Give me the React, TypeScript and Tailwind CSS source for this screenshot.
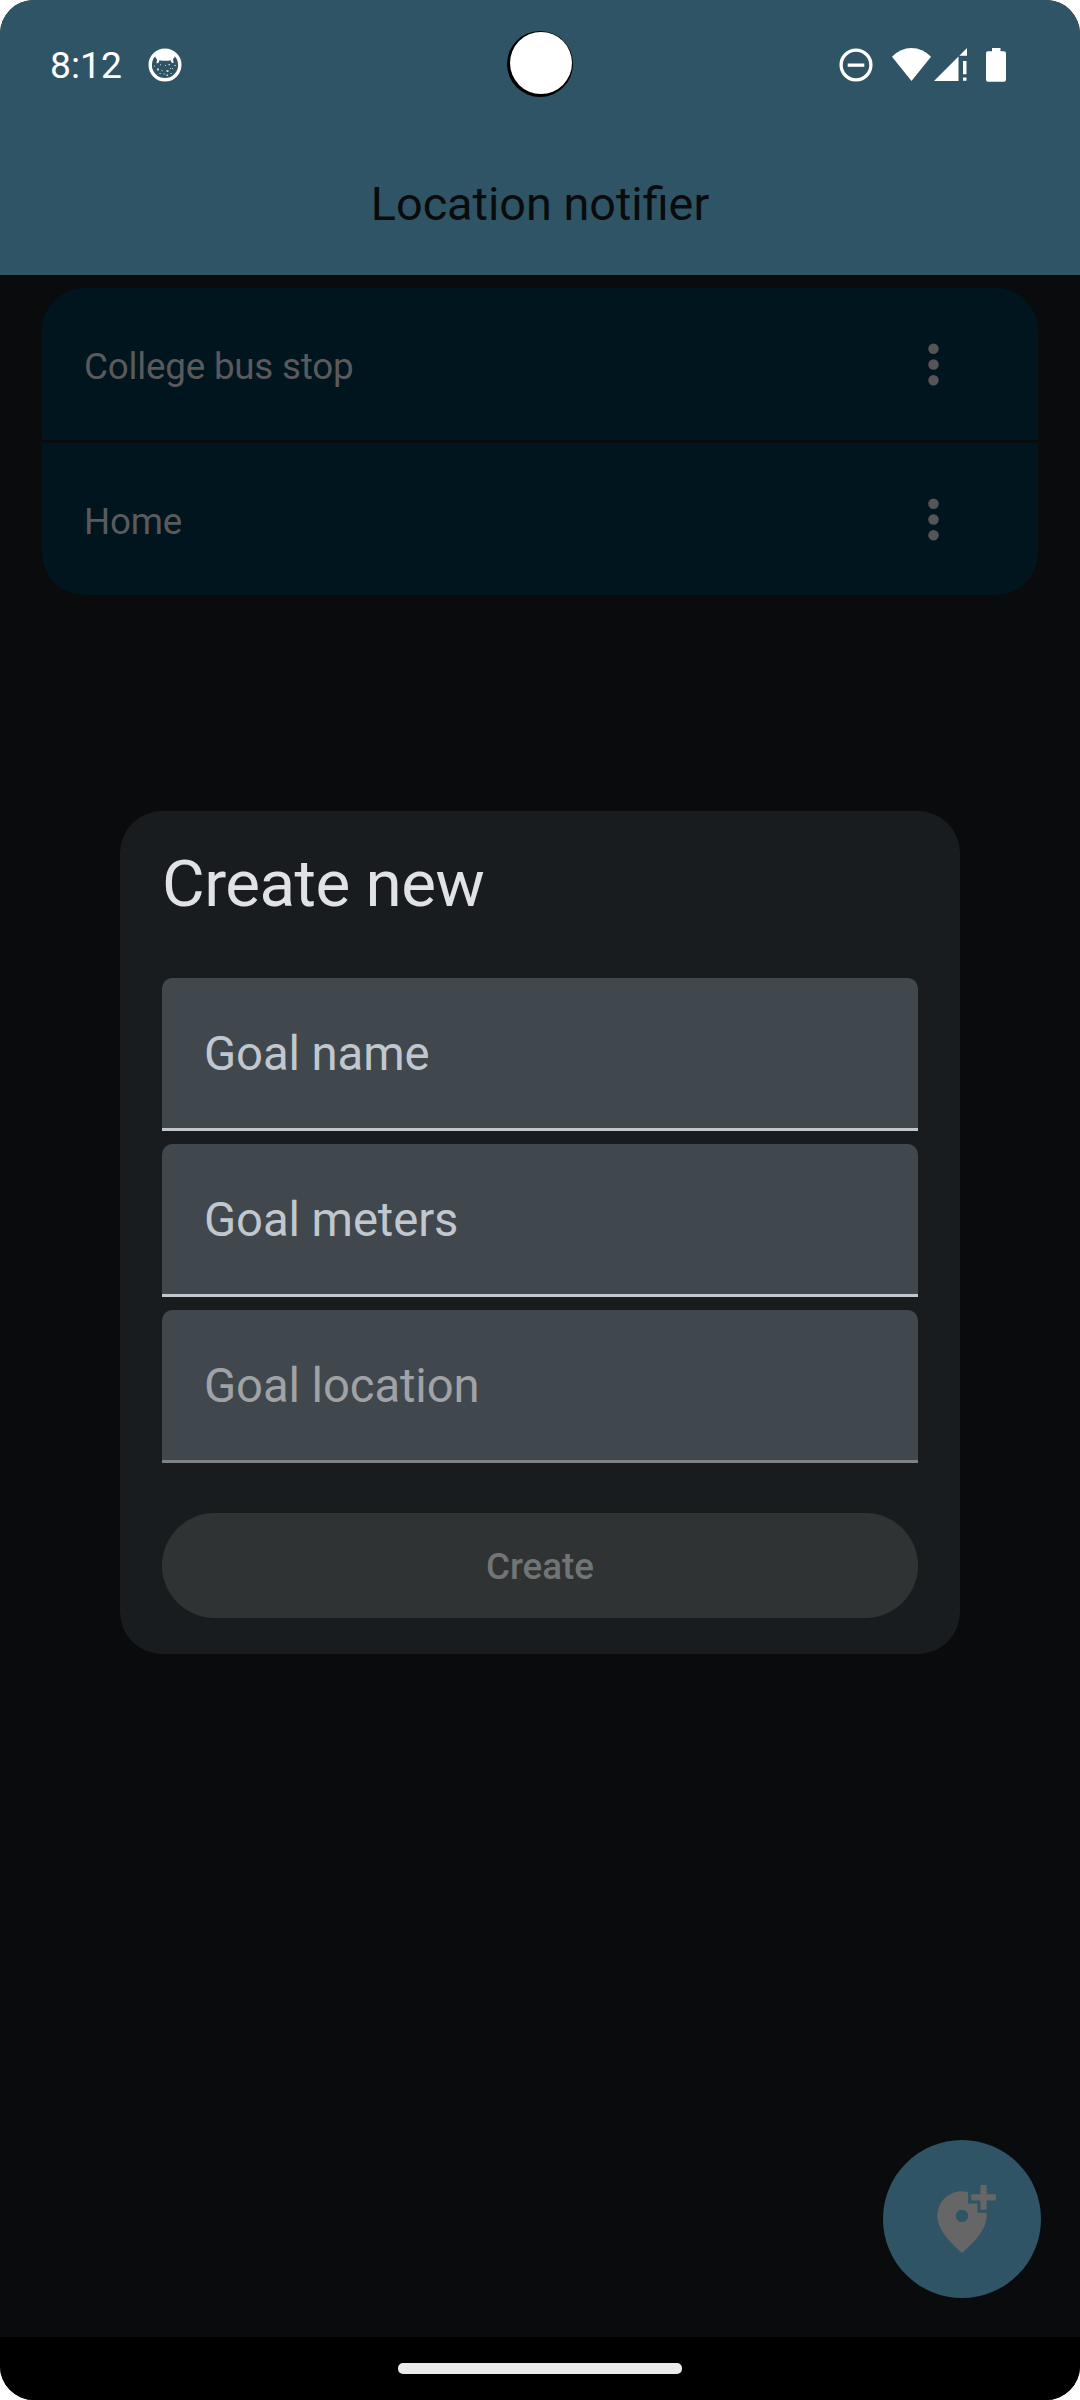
import React from "react";

function CatIcon() {
  return (
    <svg className="block size-[34px]" viewBox="0 0 34 34" fill="#fff">
      <circle cx="17" cy="17" r="14.8" fill="none" stroke="#fff" strokeWidth="3.4" />
      <path d="M7 7C12 1.200 22 1.200 27 7L26.500 9.500L25 11L25.600 15L23.800 14.800L22.500 12.200C19 13 15 13 11.500 12.200L10.500 14.800L8.600 15.600L9 11.500L7.400 9.500Z" />
      <path d="M17 17h1v1h-1zM20.500 16h1.500v1.200h-1.500zM12 16.200h1v1h-1zM9 20.500h2v2h-2zM13.500 22h1v1.200h-1zM18.500 22h2v2h-2zM24 20h1v1h-1zM26.500 17h1.500v1h-1.500zM11.500 25h1.200v1h-1.200zM15.500 25.500h1.200v1h-1.200zM18.500 26.500h1.500v1.400h-1.500zM22.500 25h1.200v1h-1.200zM6 17.500h1v1h-1zM22 20h1v1h-1z" opacity=".75" />
    </svg>
  );
}

function StatusBar() {
  return (
    <div className="flex h-[130px] items-center justify-between pl-[50px] pr-[74px]">
      <div className="flex items-center gap-[26px]">
        <span className="pt-[2px] text-[37.25px] leading-none text-white">8:12</span>
        <CatIcon />
      </div>
      <div className="flex items-center">
        <svg className="mr-[19px] block size-[34px]" viewBox="0 0 34 34">
          <circle cx="17" cy="17" r="14.900" fill="none" stroke="#fff" strokeWidth="3.300" />
          <path d="M8.700 15.500h16.600v3.300h-16.600z" fill="#fff" />
        </svg>
        <svg className="mr-[3px] block h-[34px] w-[39px]" viewBox="0 0 39 34" fill="#fff">
          <path d="M0 8.700Q8.500 0 19.500 0T39 8.700L19.500 33Z" />
        </svg>
        <svg className="mr-[19px] block h-[34px] w-[33px]" viewBox="0 0 33 34" fill="#fff">
          <path d="M0 33L24.500 8.500V33ZM25.300 7.700L33 0V7.700ZM29 13h3.500v13.300h-3.500zM29 29.500h3.500v3.300h-3.500z" />
        </svg>
        <svg className="block h-[34px] w-[20px]" viewBox="0 0 20 34" fill="#fff">
          <path d="M6 0h8.500v3.200H18a2 2 0 0 1 2 2V31.800a2 2 0 0 1-2 2H2a2 2 0 0 1-2-2V5.200a2 2 0 0 1 2-2H6Z" />
        </svg>
      </div>
    </div>
  );
}

function GoalRow({ name }: { name: string }) {
  return (
    <div className="flex h-[152px] items-center justify-between bg-[#00151d] pl-[42px] pr-[73px]">
      <span className="pt-[6px] text-[36.75px] leading-none tracking-[-0.2px] text-[#5a5a5c]">{name}</span>
      <svg className="block size-[63px]" viewBox="0 0 24 24" fill="#555">
        <circle cx="12" cy="6" r="2" />
        <circle cx="12" cy="12" r="2" />
        <circle cx="12" cy="18" r="2" />
      </svg>
    </div>
  );
}

function Field({ label, disabled = false }: { label: string; disabled?: boolean }) {
  return (
    <div
      className={
        "flex h-[153px] items-center rounded-t-[10.5px] border-b-[3px] bg-[#41484d] pl-[42px] " +
        (disabled ? "border-[#7e8386] text-[#a0a3a5]" : "border-[#c1c7ce] text-[#c1c7ce]")
      }
    >
      <span className="pt-[4px] text-[47.25px] leading-none tracking-[-0.1px]">{label}</span>
    </div>
  );
}

export default function App() {
  return (
    <div className="h-[2400px] w-[1080px] bg-white font-['Roboto',sans-serif]">
      <div className="relative flex h-full flex-col overflow-hidden rounded-[34px] bg-[#0a0b0d]">
        <header className="h-[275px] bg-[#2f5465]">
          <StatusBar />
          <h1 className="mt-[49px] text-center text-[46.8px] leading-[50px] text-[#0a0b0c]">Location notifier</h1>
        </header>

        <div className="absolute left-[507px] top-[31px] size-[66px] rounded-full bg-black">
          <div className="ml-[2.5px] mt-[0.5px] size-[62px] rounded-full bg-white" />
        </div>

        <main className="flex flex-1 flex-col px-[42px] pt-[13px]">
          <div className="flex flex-col gap-[3px] overflow-hidden rounded-[42px]">
            <GoalRow name="College bus stop" />
            <GoalRow name="Home" />
          </div>
        </main>

        <button className="mb-[39px] mr-[39px] flex size-[158px] items-center justify-center self-end rounded-full bg-[#2f5465]">
          <svg className="block size-[74px]" viewBox="0 0 24 24" fill="#666">
            <path d="M20 1v3h3v2h-3v3h-2V6h-3V4h3V1ZM12 13c1.100 0 2-.9 2-2s-.9-2-2-2-2 .9-2 2 .9 2 2 2ZM14 3.250V7h3v3h2.920c.05.390.08.790.08 1.200 0 3.320-2.670 7.250-8 11.800-5.330-4.550-8-8.480-8-11.800C4 6.220 7.800 3 12 3c.680 0 1.350.08 2 .25Z" />
          </svg>
        </button>

        <nav className="flex h-[63px] justify-center bg-black pt-[26px]">
          <div className="h-[11px] w-[284px] rounded-[5px] bg-[#ebebeb]" />
        </nav>

        <section className="absolute left-[120px] top-[811px] flex h-[843px] w-[840px] flex-col rounded-[42px] bg-[#191c1e] px-[42px]">
          <h2 className="mt-[38px] text-[65.625px] leading-[70px] tracking-[-0.55px] text-[#e1e2e5]">Create new</h2>
          <div className="mt-[59px] flex flex-col gap-[13px]">
            <Field label="Goal name" />
            <Field label="Goal meters" />
            <Field label="Goal location" disabled />
          </div>
          <button className="mt-[50px] h-[105px] rounded-full bg-[#303334] pt-[3px] text-[36.75px] font-medium text-[#727576]">
            Create
          </button>
        </section>
      </div>
    </div>
  );
}
